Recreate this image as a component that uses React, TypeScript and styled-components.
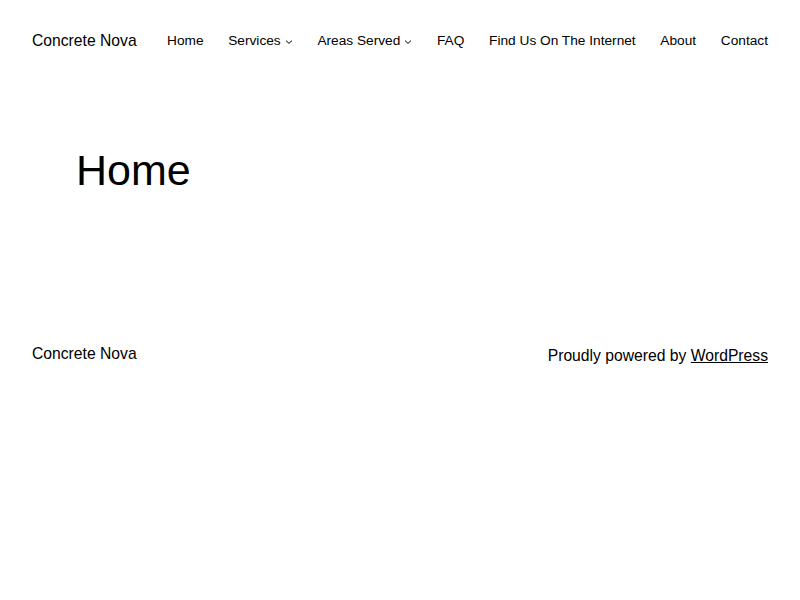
import styled, { createGlobalStyle } from "styled-components";

const GlobalStyle = createGlobalStyle`
  html, body {
    margin: 0;
    padding: 0;
    background: #fff;
  }
  body {
    font-family: "Liberation Sans", Arial, sans-serif;
    color: #000;
  }
`;

const NAV_ITEMS = [
  { label: "Home" },
  { label: "Services", submenu: true },
  { label: "Areas Served", submenu: true },
  { label: "FAQ" },
  { label: "Find Us On The Internet" },
  { label: "About" },
  { label: "Contact" },
];

function Chevron() {
  return (
    <svg width="8" height="8" viewBox="0 0 12 12" fill="none" aria-hidden="true">
      <path d="M1.5 4l4.5 4 4.5-4" stroke="currentColor" strokeWidth="1.5" />
    </svg>
  );
}

export default function App() {
  return (
    <>
      <GlobalStyle />
      <Page>
        <Header>
          <SiteTitle>Concrete Nova</SiteTitle>
          <Nav>
            {NAV_ITEMS.map((item) => (
              <NavItem key={item.label}>
                {item.label}
                {item.submenu && <Chevron />}
              </NavItem>
            ))}
          </Nav>
        </Header>
        <Main>
          <Title>Home</Title>
        </Main>
        <Footer>
          <FooterTitle>Concrete Nova</FooterTitle>
          <Credit>
            Proudly powered by <a href="#">WordPress</a>
          </Credit>
        </Footer>
      </Page>
    </>
  );
}

const Page = styled.div`
  display: flex;
  flex-direction: column;
  padding: 0 32px;
`;

const Header = styled.header`
  display: flex;
  justify-content: space-between;
  align-items: center;
  padding: 30px 0;
  line-height: 1.4;
`;

const SiteTitle = styled.div`
  font-size: 15.7px;
`;

const Nav = styled.nav`
  display: flex;
  align-items: center;
  gap: 24.7px;
  font-size: 13.7px;
`;

const NavItem = styled.span`
  display: flex;
  align-items: center;
  gap: 4px;

  svg {
    margin-top: 2px;
  }
`;

const Main = styled.main`
  padding: 63px 44px 146px;
`;

const Title = styled.h1`
  margin: 0;
  font-size: 43px;
  font-weight: 400;
  line-height: 1.2;
`;

const Footer = styled.footer`
  display: flex;
  justify-content: space-between;
  align-items: flex-start;
  font-size: 15.7px;
  line-height: 1.4;
`;

const FooterTitle = styled.div``;

const Credit = styled.div`
  padding-top: 2px;

  a {
    color: inherit;
  }
`;
